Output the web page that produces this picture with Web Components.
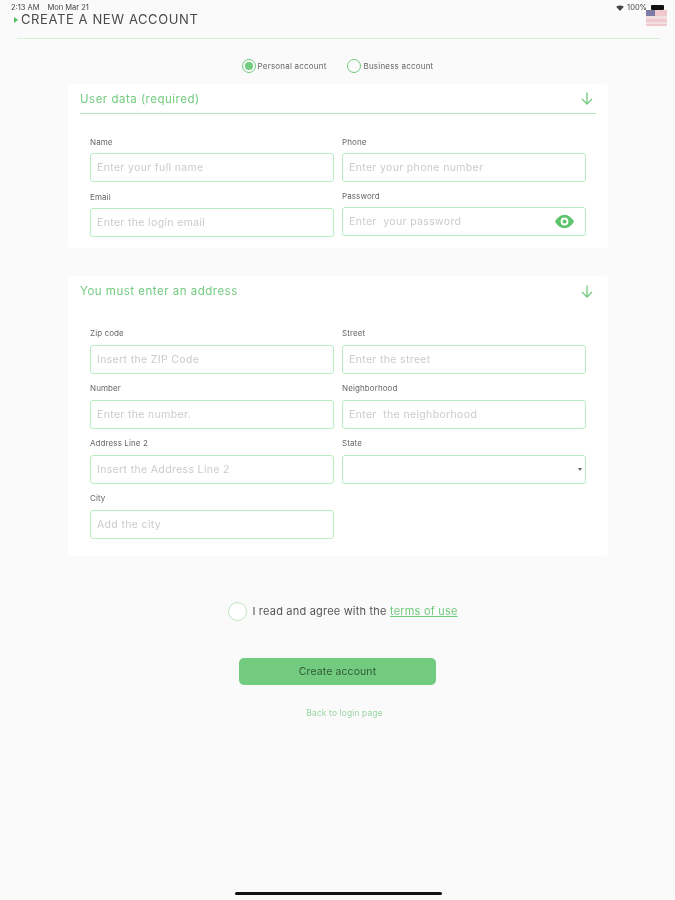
<!DOCTYPE html>
<html lang="en">
<head>
<meta charset="utf-8">
<title>Create a new account</title>
<style>
  html, body { margin: 0; height: 100%; background: #fafafa; }
  body { font-family: "Inter", "Open Sans", sans-serif; overflow: hidden; }
  create-account { filter: blur(0.55px); }
</style>
</head>
<body>
<create-account>
  <status-bar></status-bar>
  <page-header>CREATE A NEW ACCOUNT</page-header>
  <account-types></account-types>
  <form-card heading="User data (required)" underlined>
    <form-field label="Name" placeholder="Enter your full name"></form-field>
    <form-field label="Phone" placeholder="Enter your phone number"></form-field>
    <form-field label="Email" placeholder="Enter the login email"></form-field>
    <form-field label="Password" placeholder="Enter  your password" type="password"></form-field>
  </form-card>
  <form-card heading="You must enter an address" address>
    <form-field label="Zip code" placeholder="Insert the ZIP Code"></form-field>
    <form-field label="Street" placeholder="Enter the street"></form-field>
    <form-field label="Number" placeholder="Enter the number."></form-field>
    <form-field label="Neighborhood" placeholder="Enter  the neighborhood"></form-field>
    <form-field label="Address Line 2" placeholder="Insert the Address Line 2"></form-field>
    <form-field label="State" type="select"></form-field>
    <form-field label="City" placeholder="Add the city"></form-field>
  </form-card>
  <terms-row></terms-row>
  <form-actions></form-actions>
  <home-bar></home-bar>
</create-account>

<script>
const GREEN = '#72cb7e';

class CreateAccount extends HTMLElement {
  constructor() {
    super();
    this.attachShadow({ mode: 'open' });
    this.shadowRoot.innerHTML = `
      <style>
        :host { display: flex; flex-direction: column; width: 675px; height: 900px; box-sizing: border-box; background: #fafafa; }
      </style>
      <slot></slot>`;
  }
}

class StatusBar extends HTMLElement {
  constructor() {
    super();
    this.attachShadow({ mode: 'open' });
    this.shadowRoot.innerHTML = `
      <style>
        :host { display: flex; justify-content: space-between; align-items: center; height: 13px; padding: 2px 11px 0 11px; box-sizing: border-box; font-size: 7.5px; color: #444; flex: none; }
        .left { display: flex; gap: 8px; }
        .right { display: flex; align-items: center; gap: 3px; }
        .batt { width: 13px; height: 5px; background: #111; border-radius: 1px; margin-left: 1px; }
      </style>
      <div class="left"><span>2:13 AM</span><span>Mon Mar 21</span></div>
      <div class="right">
        <svg width="8" height="6" viewBox="0 0 9 7"><path d="M0 2 Q4.5 -1 9 2 L4.5 7 Z" fill="#444"/></svg>
        <span>100%</span><div class="batt"></div>
      </div>`;
  }
}

class PageHeader extends HTMLElement {
  constructor() {
    super();
    this.attachShadow({ mode: 'open' });
    this.shadowRoot.innerHTML = `
      <style>
        :host { display: block; position: relative; margin: 0 15px 0 17px; height: 25px; border-bottom: 1px solid #d5f0d9; flex: none; }
        .title { display: flex; align-items: center; gap: 3px; height: 13px; font-size: 13px; line-height: 13px; color: #4a4a4a; letter-spacing: 0.6px; white-space: nowrap; margin-left: -3px; }
        .mark { width: 0; height: 0; border-left: 4px solid #4fbf60; border-top: 3px solid transparent; border-bottom: 3px solid transparent; }
        svg { position: absolute; right: -7px; top: -3px; }
      </style>
      <div class="title"><span class="mark"></span><span><slot></slot></span></div>
      <svg width="21" height="16" viewBox="0 0 21 16">
        <rect width="21" height="16" fill="#efc9cd"/>
        <rect y="6" width="21" height="3" fill="#f3dfe1"/>
        <rect y="12" width="21" height="2" fill="#f3dfe1"/>
        <rect x="0" y="0" width="9" height="6" fill="#7c7ca6"/>
      </svg>`;
  }
}

class AccountTypes extends HTMLElement {
  constructor() {
    super();
    this.attachShadow({ mode: 'open' });
    this.shadowRoot.innerHTML = `
      <style>
        :host { display: flex; justify-content: center; gap: 21px; height: 45px; align-items: center; font-size: 8px; letter-spacing: 0.2px; color: #666; flex: none; padding-top: 8px; box-sizing: border-box; }
        .opt { display: flex; align-items: center; gap: 2px; }
        .dot { width: 14px; height: 14px; border: 1.4px solid ${GREEN}; border-radius: 50%; box-sizing: border-box; display: grid; place-items: center; }
        .on::after { content: ""; width: 8px; height: 8px; background: ${GREEN}; border-radius: 50%; }
      </style>
      <div class="opt"><span class="dot on"></span>Personal account</div>
      <div class="opt"><span class="dot"></span>Business account</div>`;
  }
}

class FormCard extends HTMLElement {
  constructor() {
    super();
    this.attachShadow({ mode: 'open' });
    const gridTop = this.hasAttribute('address') ? 20 : 21;
    this.shadowRoot.innerHTML = `
      <style>
        :host { display: block; margin: 0 67px 0 68px; background: #fff; border-radius: 4px; flex: none; padding: 0 12px; box-sizing: border-box; }
        :host([address]) { margin-top: 28px; height: 280px; --label-gap: 5px; }
        :host([underlined]) { height: 164px; }
        .head { display: flex; align-items: center; justify-content: space-between; height: 30px; box-sizing: border-box; font-size: 11.5px; color: ${GREEN}; letter-spacing: 0.5px; padding-right: 3px; }
        :host([underlined]) .head { border-bottom: 1px solid #b5e8bc; }
        .grid { display: grid; grid-template-columns: 244px 244px; column-gap: 8px; margin: ${gridTop}px 0 0 10px; }
      </style>
      <div class="head">
        <span>${this.getAttribute('heading')}</span>
        <svg width="12" height="13" viewBox="0 0 12 13" fill="none" stroke="${GREEN}" stroke-width="1.3"><path d="M6 0.5 V12 M1 7 L6 12 L11 7"/></svg>
      </div>
      <div class="grid"><slot></slot></div>`;
  }
}

class FormField extends HTMLElement {
  constructor() {
    super();
    this.attachShadow({ mode: 'open' });
    const type = this.getAttribute('type');
    let inner = `<span class="ph">${this.getAttribute('placeholder') || ''}</span>`;
    if (type === 'password') {
      inner += `<svg width="19" height="13" viewBox="0 0 19 13"><path fill-rule="evenodd" fill="#5cc46b" d="M0 6.5 C3 1.5 6 0 9.5 0 S16 1.5 19 6.5 C16 11.5 13 13 9.5 13 S3 11.5 0 6.5 Z M9.5 2.6 A3.9 3.9 0 1 0 9.5 10.4 A3.9 3.9 0 1 0 9.5 2.6 Z"/><circle cx="9.5" cy="6.5" r="2" fill="#5cc46b"/></svg>`;
    }
    if (type === 'select') {
      inner += `<span class="caret"></span>`;
    }
    this.shadowRoot.innerHTML = `
      <style>
        :host { display: block; height: 55px; }
        :host([type=password]) { margin-top: -1px; }
        label { display: block; height: 14px; font-size: 8px; line-height: 14px; color: #666; letter-spacing: 0.1px; margin-bottom: var(--label-gap, 4px); }
        .box { display: flex; align-items: center; justify-content: space-between; height: 29px; box-sizing: border-box; border: 1px solid #b8eec0; border-radius: 3px; background: #fff; padding: 0 11px 0 6px; font-size: 10.5px; color: #c9cccb; letter-spacing: 0.35px; white-space: pre; }
        .caret { width: 0; height: 0; border-top: 3px solid #666; border-left: 2.5px solid transparent; border-right: 2.5px solid transparent; margin-right: -8px; }
      </style>
      <label>${this.getAttribute('label')}</label>
      <div class="box">${inner}</div>`;
  }
}

class TermsRow extends HTMLElement {
  constructor() {
    super();
    this.attachShadow({ mode: 'open' });
    this.shadowRoot.innerHTML = `
      <style>
        :host { display: flex; align-items: center; justify-content: center; gap: 5px; margin-top: 45px; padding-left: 11px; height: 20px; font-size: 11px; color: #555; flex: none; letter-spacing: 0.2px; }
        .circle { width: 19px; height: 19px; border: 1.2px solid #bfe6c4; border-radius: 50%; box-sizing: border-box; background: #fff; }
        a { color: ${GREEN}; text-decoration: underline; }
      </style>
      <span class="circle"></span>
      <span>I read and agree with the <a>terms of use</a></span>`;
  }
}

class FormActions extends HTMLElement {
  constructor() {
    super();
    this.attachShadow({ mode: 'open' });
    this.shadowRoot.innerHTML = `
      <style>
        :host { display: flex; flex-direction: column; align-items: center; margin-top: 37px; flex: none; }
        .btn { width: 197px; height: 27px; line-height: 27px; text-align: center; background: ${GREEN}; border-radius: 5px; font-size: 10.5px; letter-spacing: 0.1px; color: #2f5a38; }
        .back { margin: 23px 0 0 14px; font-size: 8.5px; letter-spacing: 0.1px; color: #9ad7a3; }
      </style>
      <div class="btn">Create account</div>
      <div class="back">Back to login page</div>`;
  }
}

class HomeBar extends HTMLElement {
  constructor() {
    super();
    this.attachShadow({ mode: 'open' });
    this.shadowRoot.innerHTML = `
      <style>
        :host { display: block; width: 207px; height: 3px; background: #111; border-radius: 2px; margin: auto 0 5px 235px; flex: none; }
      </style>`;
  }
}

customElements.define('create-account', CreateAccount);
customElements.define('status-bar', StatusBar);
customElements.define('page-header', PageHeader);
customElements.define('account-types', AccountTypes);
customElements.define('form-card', FormCard);
customElements.define('form-field', FormField);
customElements.define('terms-row', TermsRow);
customElements.define('form-actions', FormActions);
customElements.define('home-bar', HomeBar);
</script>
</body>
</html>
